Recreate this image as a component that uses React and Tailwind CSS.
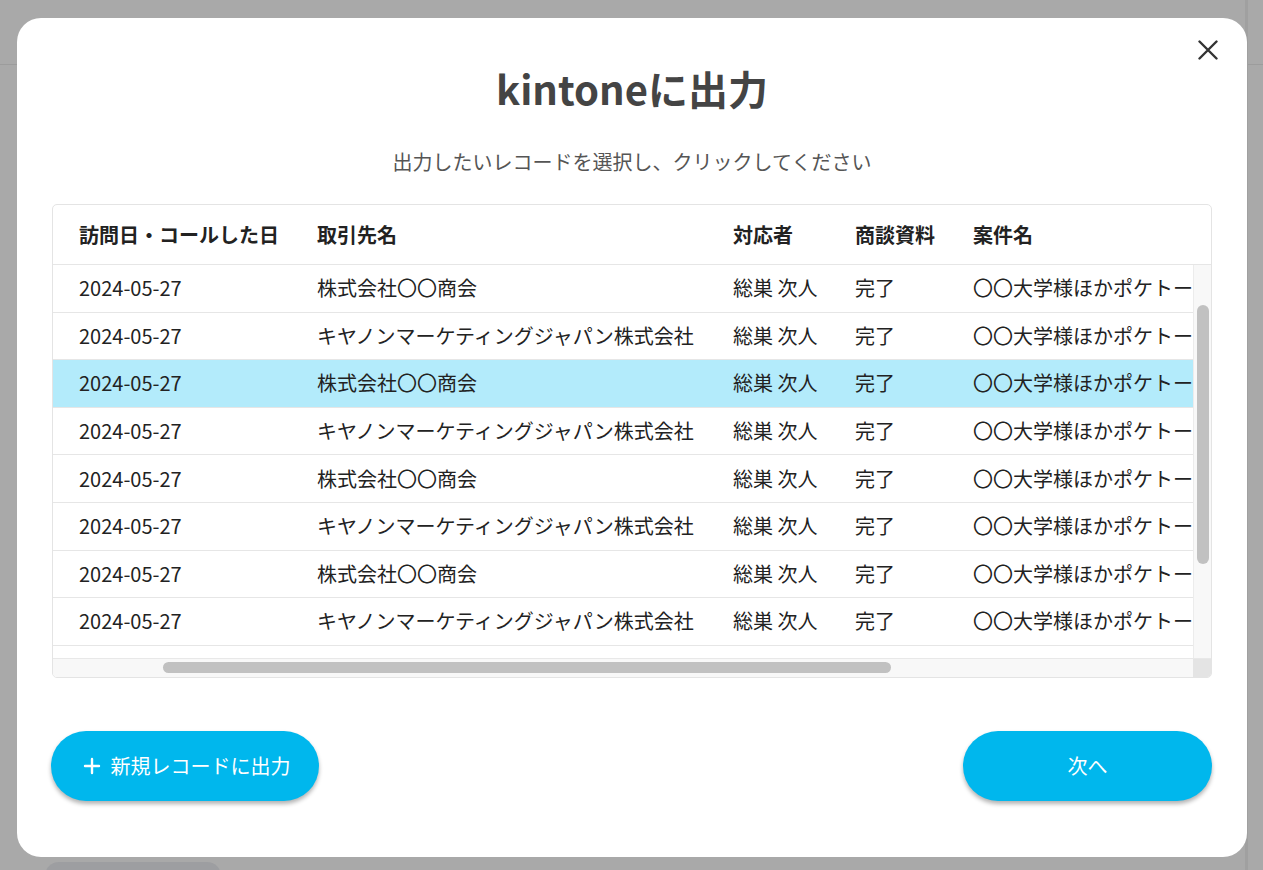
import { Plus } from "lucide-react";

const font = { fontFamily: '"Noto Sans CJK JP", "Noto Sans", sans-serif' };

const columns = [
    { label: "訪問日・コールした日", width: "w-[238px]" },
    { label: "取引先名", width: "w-[416px]" },
    { label: "対応者", width: "w-[122px]" },
    { label: "商談資料", width: "w-[118px]" },
    { label: "案件名", width: "w-[247px]" },
];

const companies = ["株式会社〇〇商会", "キヤノンマーケティングジャパン株式会社"];

const rows = Array.from({ length: 8 }, (_, i) => ({
    id: i,
    date: "2024-05-27",
    company: companies[i % 2],
    person: "総巣 次人",
    material: "完了",
    project: "〇〇大学様ほかポケトー",
}));

function Row({ row, selected }) {
    const cells = [row.date, row.company, row.person, row.material, row.project];
    return (
        <div
            className={
                "flex h-[47.6px] shrink-0 items-center border-b border-[#e6e6e6] " +
                (selected ? "bg-[#b3ebfb]" : "bg-white")
            }
        >
            {cells.map((c, i) => (
                <div key={i} className={`${columns[i].width} shrink-0 pl-[26px] text-[20px] leading-[28px] text-[#222]`}>
                    {c}
                </div>
            ))}
        </div>
    );
}

export default function App() {
    return (
        <div className="relative h-[870px] w-full overflow-hidden bg-[#a9a9a9]" style={font}>
            {/* page behind the overlay */}
            <div className="h-[65px] border-b border-[#9c9c9c]" />
            <div className="absolute bottom-[-20px] left-[45px] h-[28px] w-[176px] rounded-[14px] bg-[#9d9ea1]" />
            <div className="absolute right-[15px] top-0 h-full w-[3px] bg-[#a0a0a0]" />

            <div className="absolute left-[17px] top-[18px] flex h-[839px] w-[1230px] flex-col rounded-[24px] bg-white px-[35px]">
                <button className="absolute right-[29px] top-[22px] text-[#333]">
                    <svg width="20" height="20" viewBox="0 0 20 20" fill="none" stroke="currentColor" strokeWidth="2.4" strokeLinecap="round">
                        <path d="M1.5 1.5 18.5 18.5M18.5 1.5 1.5 18.5" />
                    </svg>
                </button>

                <h1 className="mt-[40px] text-center text-[40px] font-bold leading-[60px] text-[#444]">
                    kintoneに出力
                </h1>
                <p className="mt-[29px] text-center text-[20px] leading-[30px] text-[#555]">
                    出力したいレコードを選択し、クリックしてください
                </p>

                <div className="mt-[27px] flex w-[1160px] flex-col overflow-hidden rounded-[5px] border border-[#e4e4e4]">
                    <div className="flex h-[60px] shrink-0 items-center border-b border-[#e6e6e6]">
                        {columns.map((c) => (
                            <div
                                key={c.label}
                                className={`${c.width} shrink-0 whitespace-nowrap pl-[26px] text-[20px] font-bold text-[#222]`}
                            >
                                {c.label}
                            </div>
                        ))}
                    </div>
                    <div className="flex h-[393px]">
                        <div className="flex min-w-0 flex-1 flex-col overflow-hidden whitespace-nowrap">
                            {rows.map((r) => (
                                <Row key={r.id} row={r} selected={r.id === 2} />
                            ))}
                        </div>
                        <div className="w-[18px] shrink-0 border-l border-[#ececec] bg-[#f8f8f8]">
                            <div className="mx-auto mt-[40px] h-[259px] w-[12px] rounded-full bg-[#c1c1c1]" />
                        </div>
                    </div>
                    <div className="flex h-[19px] border-t border-[#e8e8e8]">
                        <div className="flex-1 bg-[#f8f8f8] pt-[3px]">
                            <div className="ml-[110px] h-[11px] w-[728px] rounded-full bg-[#c1c1c1]" />
                        </div>
                        <div className="w-[18px] bg-[#e4e4e4]" />
                    </div>
                </div>

                <div className="mt-[53px] flex items-center justify-between">
                    <button className="-ml-px flex h-[70px] w-[268px] items-center justify-center gap-[7px] rounded-full bg-[#00b7ed] text-[20px] text-white shadow-[0_3px_4px_rgba(0,0,0,0.3)]">
                        <Plus size={24} strokeWidth={2.4} />
                        新規レコードに出力
                    </button>
                    <button className="flex h-[70px] w-[249px] items-center justify-center rounded-full bg-[#00b7ed] text-[20px] text-white shadow-[0_3px_4px_rgba(0,0,0,0.3)]">
                        次へ
                    </button>
                </div>
            </div>
        </div>
    );
}
